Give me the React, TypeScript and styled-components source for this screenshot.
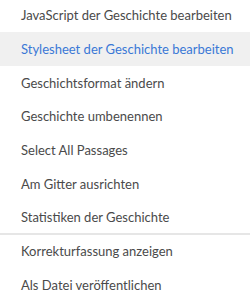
import styled, { createGlobalStyle } from "styled-components";

const GlobalStyle = createGlobalStyle`
body {
  margin: 0;
  background: #fff;
  font-family: Lato, "Open Sans", sans-serif;
}
`;

const Menu = styled.ul`
list-style: none;
margin: -1.7px 0 0;
padding: 0;
width: 250px;
`;

const Item = styled.li<{ $active?: boolean }>`
height: 33.7px;
display: flex;
align-items: center;
padding-left: 21px;
font-size: 13px;
color: ${(props) => props.$active ? "#3a78d6" : "#4a4a4a"};
background: ${(props) => props.$active ? "#f0f0f0" : "transparent"};
white-space: nowrap;
`;

const Separator = styled.li`
height: 2px;
margin: -1px 0 -1px;
background: #e6e6e6;
`;

const groups = [
  [
    "JavaScript der Geschichte bearbeiten",
    "Stylesheet der Geschichte bearbeiten",
    "Geschichtsformat ändern",
    "Geschichte umbenennen",
    "Select All Passages",
    "Am Gitter ausrichten",
    "Statistiken der Geschichte",
  ],
  ["Korrekturfassung anzeigen", "Als Datei veröffentlichen"],
];

const App = () => {
  return <>
    <GlobalStyle />
    <Menu>
      {groups.map((group, gi) => [
        gi > 0 && <Separator key={"sep" + gi} />,
        ...group.map((label) => (
          <Item key={label} $active={label.startsWith("Stylesheet")}>{label}</Item>
        )),
      ])}
    </Menu>
  </>;
};

export default App;
